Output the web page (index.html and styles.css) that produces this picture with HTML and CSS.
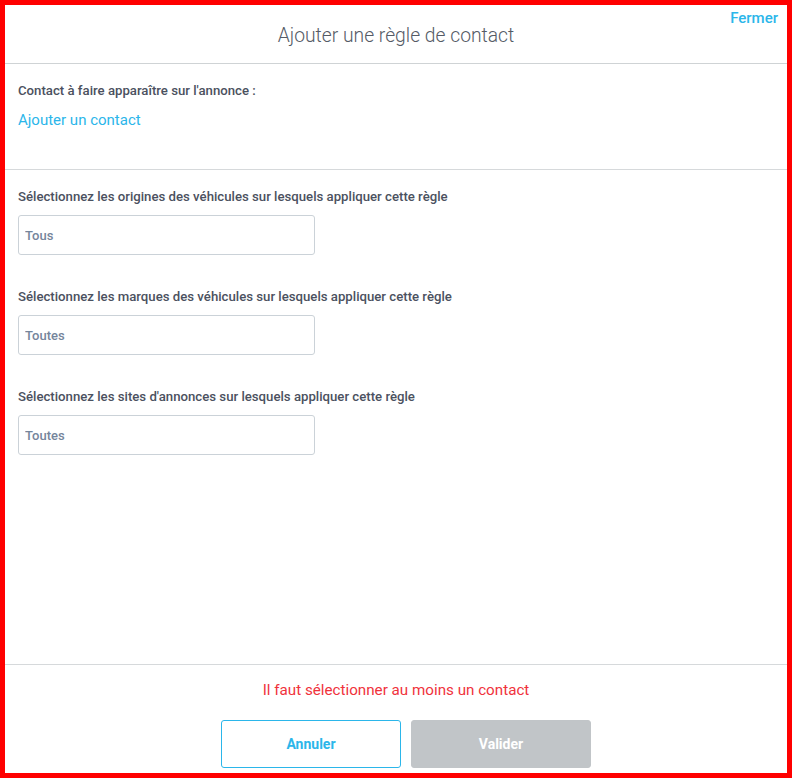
FILE: index.html
```html
<!DOCTYPE html>
<html>
<head>
	<meta charset="utf-8">
	<title>Ajouter une règle de contact</title>
	<link rel="stylesheet" href="styles.css">
</head>
<body>
	<div class="modal">
		<div class="modal-header">
			<h3 class="modal-title">Ajouter une règle de contact</h3>
			<a class="close-link" href="#">Fermer</a>
		</div>

		<div class="section section-contact">
			<div class="field-label">Contact à faire apparaître sur l'annonce :</div>
			<a class="add-link" href="#">Ajouter un contact</a>
		</div>

		<div class="section section-grow">
			<div class="field">
				<div class="field-label">Sélectionnez les origines des véhicules sur lesquels appliquer cette règle</div>
				<input class="select-input" type="text" placeholder="Tous">
			</div>
			<div class="field">
				<div class="field-label">Sélectionnez les marques des véhicules sur lesquels appliquer cette règle</div>
				<input class="select-input" type="text" placeholder="Toutes">
			</div>
			<div class="field">
				<div class="field-label">Sélectionnez les sites d'annonces sur lesquels appliquer cette règle</div>
				<input class="select-input" type="text" placeholder="Toutes">
			</div>
		</div>

		<div class="modal-footer">
			<div class="error-msg">Il faut sélectionner au moins un contact</div>
			<div class="buttons">
				<button class="btn btn-cancel">Annuler</button>
				<button class="btn btn-valid" disabled>Valider</button>
			</div>
		</div>
	</div>
</body>
</html>
```

FILE: styles.css
```css
html, body {
	margin:0;
	padding:0;
	background:#fff;
}
body {
	font-family:Roboto, "Liberation Sans", sans-serif;
	color:#4a505c;
}
.modal {
	box-sizing:border-box;
	width:792px;
	height:778px;
	border:5px solid #ff0000;
	display:flex;
	flex-direction:column;
}
.modal-header {
	position:relative;
	height:58px;
	border-bottom:1px solid #cfd3d5;
	display:flex;
	align-items:center;
	justify-content:center;
}
.modal-title {
	margin:0;
	font-size:19.3px;
	font-weight:300;
	color:#555b66;
	padding-top:2px;
}
.close-link {
	position:absolute;
	top:4px;
	right:9px;
	font-size:15px;
	font-weight:500;
	color:#2bb6ea;
	text-decoration:none;
}
.section {
	padding:18px 13px 0 13px;
	border-bottom:1px solid #d6d9db;
}
.section-contact {
	padding-bottom:39px;
}
.section-grow {
	flex:1;
}
.field-label {
	font-size:13.2px;
	font-weight:500;
	line-height:18px;
	color:#4b5160;
}
.add-link {
	display:block;
	margin-top:10px;
	font-size:15px;
	line-height:20px;
	color:#2bb6ea;
	text-decoration:none;
}
.field {
	margin-bottom:33px;
}
.select-input {
	display:block;
	box-sizing:border-box;
	margin-top:9px;
	width:297px;
	height:40px;
	padding:0 6px;
	border:1px solid #cbd2d8;
	border-radius:3px;
	font-family:inherit;
	font-size:13px;
	font-weight:500;
	outline:none;
}
.select-input::placeholder {
	color:#75859b;
}
.modal-footer {
	padding:15px 0 5px 0;
}
.error-msg {
	text-align:center;
	font-size:15.2px;
	line-height:20px;
	color:#f0323c;
}
.buttons {
	display:flex;
	justify-content:center;
	gap:10px;
	margin-top:20px;
	padding-left:20px;
}
.btn {
	box-sizing:border-box;
	width:180px;
	height:48px;
	border-radius:3px;
	font-family:inherit;
	font-size:14px;
	font-weight:700;
	cursor:pointer;
}
.btn-cancel {
	background:#fff;
	border:1px solid #2bb6ea;
	color:#2bb6ea;
}
.btn-valid {
	background:#c1c5c8;
	border:1px solid #c1c5c8;
	color:#fff;
}
```
